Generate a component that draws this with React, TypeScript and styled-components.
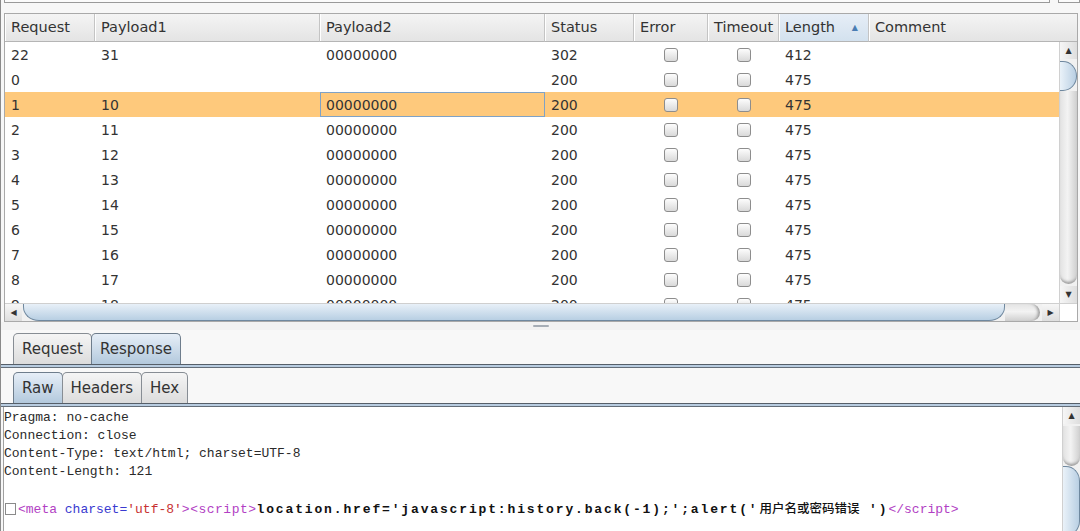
import React from "react";
import styled, { createGlobalStyle } from "styled-components";

const GlobalStyle = createGlobalStyle`
  html, body { margin: 0; padding: 0; background: #f7f7f7; overflow: hidden; }
  #root { width: 1080px; height: 531px; }
`;

const COLS = "90px 225px 225px 89px 74px 71px 90px 1fr";

const Page = styled.div`
  width: 1080px;
  height: 531px;
  display: flex;
  flex-direction: column;
  background: #f7f7f7;
  font-family: "DejaVu Sans", "Noto Sans", sans-serif;
  color: #333;
  overflow: hidden;
  border-left: 1px solid #8a8a8a;
  box-sizing: border-box;
`;

const TopStrip = styled.div`
  height: 13px;
  display: flex;
  align-items: flex-start;
  padding-left: 3px;
  gap: 8px;
`;

const TopField = styled.div<{ $w: number }>`
  width: ${(p) => p.$w}px;
  height: 2px;
  border-left: 1px solid #9a9a9a;
  border-bottom: 1px solid #9a9a9a;
  border-right: 1px solid #9a9a9a;
  background: #fbfbfb;
`;

const TableFrame = styled.div`
  margin-left: 3px;
  width: 1074px;
  height: 309px;
  box-sizing: border-box;
  border: 1px solid #a9a9a9;
  display: flex;
  flex-direction: column;
  background: #fff;
`;

const HeaderRow = styled.div`
  display: grid;
  grid-template-columns: ${COLS};
  height: 28px;
  flex: none;
`;

const HeaderCell = styled.div<{ $active?: boolean }>`
  display: flex;
  align-items: center;
  justify-content: space-between;
  padding: 0 10px 1px 6px;
  box-sizing: border-box;
  font-size: 14.5px;
  color: #333;
  background: ${(p) =>
    p.$active
      ? "linear-gradient(#e6eef7, #d3e1ee)"
      : "linear-gradient(#f4f4f4, #e4e4e4)"};
  border-right: 1px solid #c4c4c4;
  border-bottom: 1px solid #b5b5b5;
  box-shadow: inset 1px 0 0 #ffffff;
  &:last-child { border-right: none; }
`;

const SortArrow = styled.span`
  font-size: 8px;
  color: #4a7db3;
  margin-top: 1px;
`;

const Body = styled.div`
  display: flex;
  height: 261px;
  flex: none;
`;

const Rows = styled.div`
  flex: 1;
  overflow: hidden;
  background: #fff;
`;

const Row = styled.div<{ $sel?: boolean }>`
  display: grid;
  grid-template-columns: ${COLS};
  height: 25px;
  background: ${(p) => (p.$sel ? "#fec97c" : "transparent")};
`;

const Cell = styled.div<{ $center?: boolean; $focus?: boolean }>`
  display: flex;
  align-items: center;
  justify-content: ${(p) => (p.$center ? "center" : "flex-start")};
  padding-left: ${(p) => (p.$center ? "0" : "6px")};
  font-size: 14px;
  color: #333;
  box-shadow: ${(p) => (p.$focus ? "inset 0 0 0 1px #7fa2c6" : "none")};
`;

const Check = styled.span`
  width: 14px;
  height: 14px;
  box-sizing: border-box;
  border: 1px solid #8d8d8d;
  border-radius: 3px;
  background: linear-gradient(#fdfdfd, #d9d9d9);
`;

/* Scrollbars */
const VBar = styled.div<{ $w?: number }>`
  width: ${(p) => p.$w ?? 18}px;
  display: flex;
  flex-direction: column;
  flex: none;
  background: #f1f1f1;
  border-left: 1px solid #d0d0d0;
  box-sizing: border-box;
`;

const HBar = styled.div`
  flex: 1;
  display: flex;
  background: #f1f1f1;
  border-top: 1px solid #cfcfcf;
  box-sizing: border-box;
`;

const Arrow = styled.div<{ $h?: boolean }>`
  flex: none;
  width: ${(p) => (p.$h ? "17px" : "100%")};
  height: ${(p) => (p.$h ? "100%" : "17px")};
  display: flex;
  align-items: center;
  justify-content: center;
  font-size: 8px;
  color: #333;
  background: ${(p) =>
    p.$h ? "linear-gradient(#f6f6f6, #dedede)" : "linear-gradient(to right, #f6f6f6, #dedede)"};
`;

const VTrack = styled.div`
  flex: 1;
  display: flex;
  flex-direction: column;
  padding: 2px 0 2px 0;
`;

const HTrack = styled.div`
  flex: 1;
  display: flex;
  padding: 0 2px 0 1px;
`;

const VThumb = styled.div<{ $h: number }>`
  height: ${(p) => p.$h}px;
  flex: none;
  box-sizing: border-box;
  border: 1px solid #6f889f;
  border-left: none;
  border-radius: 0 14px 14px 0 / 0 15px 15px 0;
  background: linear-gradient(to right, #eaf2f9, #b9cfe3);
`;

const VRest = styled.div<{ $top?: boolean }>`
  flex: ${(p) => (p.$top ? "none" : "1")};
  height: ${(p) => (p.$top ? "40px" : "auto")};
  border-radius: 0 0 9px 9px;
  background: linear-gradient(to right, #e2e2e2, #f3f3f3 45%, #cfcfcf);
  box-shadow: inset 0 -4px 3px -2px #9c9c9c;
`;

const HThumb = styled.div<{ $w: number }>`
  width: ${(p) => p.$w}px;
  flex: none;
  box-sizing: border-box;
  border: 1px solid #6f889f;
  border-top: none;
  border-radius: 0 0 16px 16px / 0 0 14px 14px;
  background: linear-gradient(#e8f0f8, #b8cfe3);
`;

const HRest = styled.div`
  flex: 1;
  border-radius: 0 9px 9px 0;
  background: linear-gradient(#e4e4e4, #f3f3f3 45%, #cfcfcf);
  box-shadow: inset -4px 0 3px -2px #9c9c9c;
`;

const HScrollRow = styled.div`
  height: 18px;
  display: flex;
  flex: none;
`;

const Corner = styled.div`
  width: 18px;
  background: #fff;
  border-left: 1px solid #d0d0d0;
  border-top: 1px solid #d0d0d0;
  box-sizing: border-box;
`;

/* Splitter */
const Splitter = styled.div`
  height: 8px;
  flex: none;
  display: flex;
  align-items: center;
  justify-content: center;
  background: #f2f2f2;
`;

const Grip = styled.div`
  width: 16px;
  height: 2px;
  background: #a6adb5;
  border-radius: 1px;
`;

/* Tabs */
const TabRow = styled.div<{ $h: number }>`
  height: ${(p) => p.$h}px;
  flex: none;
  display: flex;
  align-items: flex-end;
  padding-left: 12px;
  background: #f8f8f8;
`;

const Tab = styled.div<{ $sel?: boolean }>`
  height: 31px;
  box-sizing: border-box;
  padding: 0 8px;
  margin-right: -1px;
  display: flex;
  align-items: center;
  font-size: 15px;
  color: #333;
  border: 1px solid ${(p) => (p.$sel ? "#6e7d8c" : "#878d94")};
  border-bottom: none;
  border-radius: 5px 5px 0 0;
  background: ${(p) =>
    p.$sel ? "linear-gradient(#e6eef7, #b3c9dd)" : "linear-gradient(#f5f5f5, #dcdcdc)"};
`;

const Band = styled.div`
  height: 4px;
  flex: none;
  box-sizing: border-box;
  border-top: 1px solid #565f69;
  border-bottom: 1px solid #646e79;
  background: #b8cce0;
`;

/* Editor */
const Editor = styled.div`
  flex: 1;
  display: flex;
  min-height: 0;
`;

const TextPane = styled.div`
  flex: 1;
  margin-left: 2px;
  background: #fff;
  border-left: 1px solid #a0a0a0;
  padding-top: 2px;
  font-family: "Liberation Mono", "DejaVu Sans Mono", monospace;
  font-size: 13px;
  line-height: 18px;
  color: #2a2a2a;
  white-space: pre;
  overflow: hidden;
`;

const Line = styled.div`
  height: 18px;
`;

const Box = styled.span`
  display: inline-block;
  width: 11px;
  height: 12px;
  box-sizing: border-box;
  border: 1px solid #8a8a8a;
  vertical-align: -2px;
  margin: 0 2px 0 1px;
`;

const Tok = styled.span<{ $c: string; $bold?: boolean; $ls?: number }>`
  color: ${(p) => p.$c};
  font-weight: ${(p) => (p.$bold ? 700 : 400)};
  letter-spacing: ${(p) => p.$ls ?? 0}px;
`;

const Cjk = styled.span`
  font-family: "Noto Sans CJK SC", sans-serif;
  color: #111;
  font-size: 12.5px;
  font-weight: 500;
  margin-left: 1px;
`;

type R = { req: string; p1: string; p2: string; status: string; len: string; sel?: boolean };

const rows: R[] = [
  { req: "22", p1: "31", p2: "00000000", status: "302", len: "412" },
  { req: "0", p1: "", p2: "", status: "200", len: "475" },
  { req: "1", p1: "10", p2: "00000000", status: "200", len: "475", sel: true },
  ...Array.from({ length: 8 }, (_, i) => ({
    req: String(i + 2),
    p1: String(i + 11),
    p2: "00000000",
    status: "200",
    len: "475",
  })),
];

const headers = ["Request", "Payload1", "Payload2", "Status", "Error", "Timeout", "Length", "Comment"];

const TAG = "#b23fc4";
const ATTR = "#3a3ad0";
const VAL = "#c83232";

export default function App() {
  return (
    <>
      <GlobalStyle />
      <Page>
        <TopStrip>
          <TopField $w={1046} />
          <TopField $w={20} />
        </TopStrip>

        <TableFrame>
          <HeaderRow>
            {headers.map((h) => (
              <HeaderCell key={h} $active={h === "Length"}>
                <span>{h}</span>
                {h === "Length" && <SortArrow>▲</SortArrow>}
              </HeaderCell>
            ))}
          </HeaderRow>
          <Body>
            <Rows>
              {rows.map((r, i) => (
                <Row key={i} $sel={r.sel}>
                  <Cell>{r.req}</Cell>
                  <Cell>{r.p1}</Cell>
                  <Cell $focus={r.sel}>{r.p2}</Cell>
                  <Cell>{r.status}</Cell>
                  <Cell $center>
                    <Check />
                  </Cell>
                  <Cell $center>
                    <Check />
                  </Cell>
                  <Cell>{r.len}</Cell>
                  <Cell />
                </Row>
              ))}
            </Rows>
            <VBar>
              <Arrow>▲</Arrow>
              <VTrack>
                <VThumb $h={30} />
                <VRest />
              </VTrack>
              <Arrow>▼</Arrow>
            </VBar>
          </Body>
          <HScrollRow>
            <HBar>
              <Arrow $h>◀</Arrow>
              <HTrack>
                <HThumb $w={982} />
                <HRest />
              </HTrack>
              <Arrow $h>▶</Arrow>
            </HBar>
            <Corner />
          </HScrollRow>
        </TableFrame>

        <Splitter>
          <Grip />
        </Splitter>

        <TabRow $h={34}>
          <Tab>Request</Tab>
          <Tab $sel>Response</Tab>
        </TabRow>
        <Band />
        <TabRow $h={35}>
          <Tab $sel>Raw</Tab>
          <Tab>Headers</Tab>
          <Tab>Hex</Tab>
        </TabRow>
        <Band />

        <Editor>
          <TextPane>
            <Line>Pragma: no-cache</Line>
            <Line>Connection: close</Line>
            <Line>Content-Type: text/html; charset=UTF-8</Line>
            <Line>Content-Length: 121</Line>
            <Line> </Line>
            <Line>
              <Box />
              <Tok $c={TAG}>&lt;meta </Tok>
              <Tok $c={ATTR}>charset=</Tok>
              <Tok $c={VAL}>'utf-8'</Tok>
              <Tok $c={TAG} $ls={0.5}>&gt;&lt;script&gt;</Tok>
              <Tok $c="#111" $bold $ls={1.85}>
                location.href='javascript:history.back(-1);';alert('
              </Tok>
              <Cjk>用户名或密码错误</Cjk>
              <Tok $c="#111" $bold $ls={1.85}> ')</Tok>
              <Tok $c={TAG}>&lt;/script&gt;</Tok>
            </Line>
          </TextPane>
          <VBar>
            <Arrow>▲</Arrow>
            <VTrack>
              <VRest $top />
              <VThumb $h={70} />
            </VTrack>
          </VBar>
        </Editor>
      </Page>
    </>
  );
}
